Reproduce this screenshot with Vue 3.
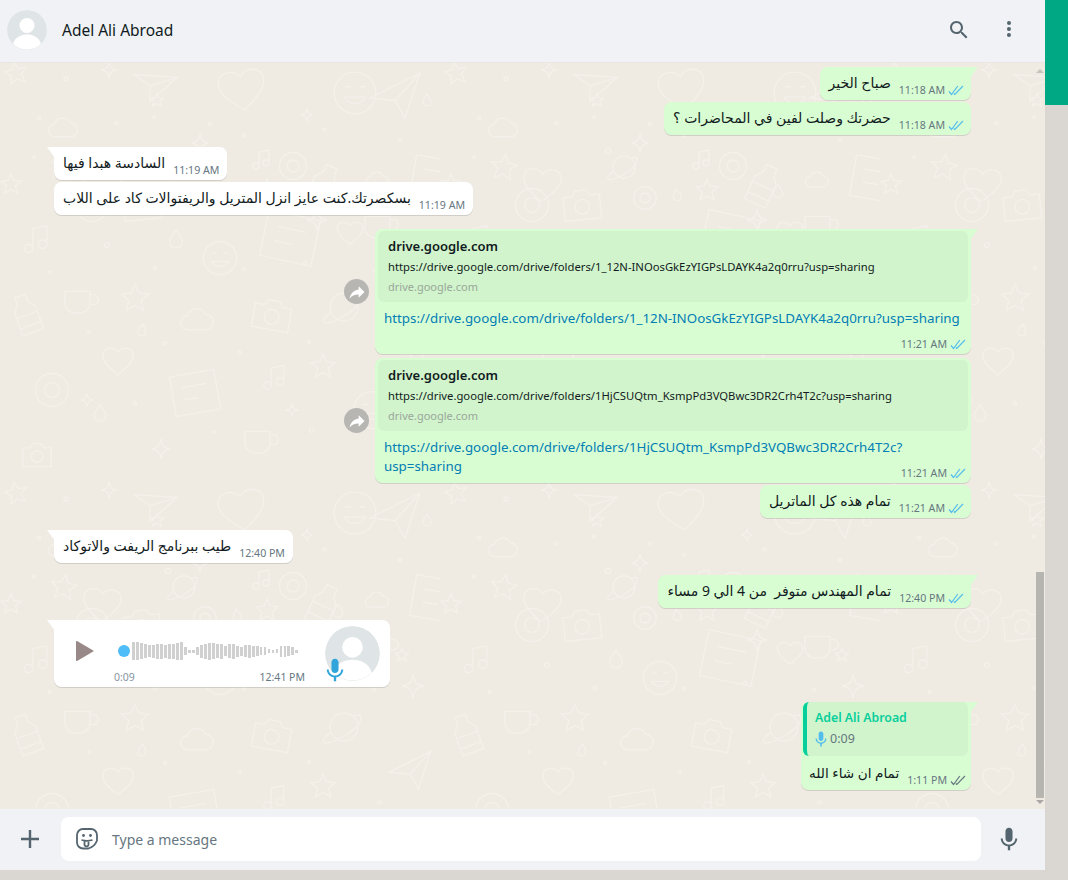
<script setup>
const doodleShapes = {
  star: 'M12 1l3 7 8 1-6 5 2 8-7-4-7 4 2-8-6-5 8-1z',
  spark: 'M12 1c1 7 3 10 10 11-7 1-9 4-10 11-1-7-3-10-10-11 7-1 9-4 10-11z',
  heart: 'M12 21C4 15 1 11 2 7c1-4 7-5 10-1 3-4 9-3 10 1 1 4-2 8-10 14z',
  ring: 'M12 3a9 9 0 1 0 0 18 9 9 0 0 0 0-18zm0 5a4 4 0 1 1 0 8 4 4 0 0 1 0-8z',
  cloud: 'M6 19a5 5 0 0 1-1-10 7 7 0 0 1 13-1 5.500 5.500 0 0 1 0 11z',
  bottle: 'M9 1h6v4l3 4v13H6V9l3-4zM6 12h12M6 18h12',
  camera: 'M2 7h5l2-3h6l2 3h5v13H2zM12 9a4 4 0 1 0 0 8 4 4 0 0 0 0-8z',
  face: 'M12 2a10 10 0 1 0 0 20 10 10 0 0 0 0-20zM7 9h3M14 9h3M7 14c2 4 8 4 10 0z',
  plane: 'M2 14l20-10-6 18-4-7zM12 15l10-11',
  planet: 'M12 5a7 7 0 1 0 0 14 7 7 0 0 0 0-14zM5 15C1 18 1 20 3 20c3 0 12-4 16-9 2-3 2-5 0-5-1 0-2 0-3 1',
  note: 'M9 18V4l10-2v13M9 18a3 3 0 1 1-6 0 3 3 0 0 1 6 0zM19 15a3 3 0 1 1-6 0 3 3 0 0 1 6 0z',
  cup: 'M3 8h15v7a6 6 0 0 1-6 6H9a6 6 0 0 1-6-6zM18 10h2a2 2 0 0 1 0 6h-2',
  card: 'M3 4h18v16H3zM7 9h10M7 14h6',
  dot: 'M12 8a4 4 0 1 0 0 8 4 4 0 0 0 0-8z',
  drop: 'M12 2c5 7 7 10 7 13a7 7 0 0 1-14 0c0-3 2-6 7-13z'
}

const doodles = [
  ['star', 4, 8, 24, -12], ['cloud', 48, 60, 30, 0], ['star', 50, 100, 28, 8], ['ring', 70, 130, 44, 0],
  ['heart', 80, 110, 44, 4], ['spark', 100, 8, 18, 0], ['dot', 60, 20, 12, 0], ['plane', 130, 5, 46, 30],
  ['heart', 215, 10, 54, -8], ['dot', 160, 90, 16, 0], ['spark', 190, 80, 20, 0], ['planet', 165, 95, 38, 0],
  ['note', 250, 95, 24, 0], ['ring', 275, 95, 36, 0], ['star', 255, 125, 24, 0], ['bottle', 300, 110, 46, 25],
  ['face', 330, 15, 50, 0], ['plane', 365, 10, 60, 0], ['card', 405, 95, 62, 10], ['cloud', 365, 115, 24, 0],
  ['camera', 120, 130, 44, -6], ['cup', 360, 150, 40, 0], ['drop', 330, 130, 16, 0], ['star', 0, 120, 22, 0],
  ['card', 255, 150, 70, 12], ['heart', 335, 165, 30, 0], ['spark', 305, 155, 24, 0], ['ring', 190, 130, 30, 0],
  ['note', 20, 170, 34, 0], ['dot', 100, 185, 14, 0], ['drop', 165, 175, 22, 0], ['face', 200, 185, 40, 0],
  ['cup', 60, 225, 40, 0], ['star', 120, 230, 30, 0], ['camera', 250, 240, 44, 10], ['planet', 320, 230, 48, 0],
  ['spark', 400, 200, 26, 0], ['bottle', 5, 240, 44, -20], ['cloud', 180, 250, 34, 0], ['plane', 385, 270, 50, 0],
  ['heart', 100, 290, 36, 0], ['ring', 30, 315, 44, 0], ['card', 165, 310, 60, -10], ['note', 260, 310, 30, 0],
  ['star', 310, 300, 26, 0], ['face', 350, 335, 44, 0], ['drop', 90, 350, 20, 0], ['cup', 240, 365, 40, 0],
  ['spark', 150, 385, 22, 0], ['dot', 305, 370, 14, 0], ['cloud', 410, 365, 30, 0], ['camera', 20, 385, 34, 0],
  ['dot', 34, 60, 10, 0], ['dot', 112, 66, 9, 0], ['dot', 205, 66, 10, 0], ['dot', 320, 72, 9, 0],
  ['dot', 30, 100, 8, 0], ['dot', 150, 60, 8, 0], ['dot', 240, 78, 8, 0], ['dot', 395, 82, 10, 0],
  ['dot', 45, 215, 9, 0], ['dot', 150, 210, 10, 0], ['dot', 240, 212, 8, 0], ['dot', 300, 205, 10, 0],
  ['dot', 370, 212, 9, 0], ['dot', 85, 275, 8, 0], ['dot', 160, 285, 10, 0], ['dot', 235, 295, 9, 0],
  ['dot', 305, 285, 8, 0], ['dot', 375, 325, 9, 0], ['dot', 130, 345, 10, 0], ['dot', 210, 375, 8, 0],
  ['drop', 135, 270, 14, 10], ['drop', 230, 135, 14, -10], ['spark', 80, 340, 14, 0], ['spark', 285, 350, 14, 0],
  ['star', 395, 175, 14, 0], ['star', 150, 40, 14, 0], ['spark', 300, 55, 14, 0], ['drop', 420, 40, 14, 0]
].map(([kind, x, y, size, rot]) => ({
  kind,
  size,
  transform: `translate(${x} ${y}) rotate(${rot} ${size / 2} ${size / 2}) scale(${size / 24})`
}))

const searchPath = 'M15.500 14h-.79l-.28-.27C15.410 12.590 16 11.110 16 9.500 16 5.910 13.090 3 9.500 3S3 5.910 3 9.500 5.910 16 9.500 16c1.610 0 3.090-.59 4.230-1.570l.27.28v.79l5 4.990L20.490 19l-4.990-5zm-6 0C7.010 14 5 11.990 5 9.500S7.010 5 9.500 5 14 7.010 14 9.500 11.990 14 9.500 14z'
const micPath = 'M11.999 14.942c2.001 0 3.531-1.530 3.531-3.531V4.350c0-2.001-1.530-3.531-3.531-3.531S8.469 2.350 8.469 4.350v7.061c0 2.001 1.530 3.531 3.530 3.531zm6.238-3.530c0 3.531-2.942 6.002-6.237 6.002s-6.237-2.471-6.237-6.002H3.761c0 4.001 3.178 7.297 7.061 7.885v3.884h2.354v-3.884c3.884-.588 7.061-3.884 7.061-7.885h-2.001z'

const urlOne = 'https://drive.google.com/drive/folders/1_12N-INOosGkEzYIGPsLDAYK4a2q0rru?usp=sharing'
const urlTwo = 'https://drive.google.com/drive/folders/1HjCSUQtm_KsmpPd3VQBwc3DR2Crh4T2c?usp=sharing'

const waveform = [
  18, 18, 16, 14, 12, 13, 15, 15, 13, 15, 15, 17, 18, 8, 3, 3, 8, 13, 15, 17, 16, 14, 15, 10, 14, 15,
  11, 9, 12, 13, 11, 10, 8, 8, 4, 3, 4, 11, 11, 10, 8, 3
]

const rows = [
  { id: 1, kind: 'text', side: 'out', tail: true, gap: 'first', text: 'صباح الخير', time: '11:18 AM', read: true },
  { id: 2, kind: 'text', side: 'out', gap: 's', text: 'حضرتك وصلت لفين في المحاضرات ؟', time: '11:18 AM', read: true },
  { id: 3, kind: 'text', side: 'in', tail: true, gap: 'l', text: 'السادسة هبدا فيها', time: '11:19 AM' },
  { id: 4, kind: 'text', side: 'in', gap: 's', text: 'بسكصرتك.كنت عايز انزل المتريل والريفتوالات كاد على اللاب', time: '11:19 AM' },
  { id: 5, kind: 'link', side: 'out', tail: true, gap: 'xl', url: urlOne, time: '11:21 AM', read: true },
  { id: 6, kind: 'link', side: 'out', gap: 'm', url: urlTwo, time: '11:21 AM', read: true },
  { id: 7, kind: 'text', side: 'out', gap: 's', text: 'تمام هذه كل الماتريل', time: '11:21 AM', read: true },
  { id: 8, kind: 'text', side: 'in', tail: true, gap: 'l', text: 'طيب ببرنامج الريفت والاتوكاد', time: '12:40 PM' },
  { id: 9, kind: 'text', side: 'out', tail: true, gap: 'l', text: 'تمام المهندس متوفر  من 4 الي 9 مساء', time: '12:40 PM', read: true },
  { id: 10, kind: 'voice', side: 'in', tail: true, gap: 'l' },
  { id: 11, kind: 'quote', side: 'out', tail: true, gap: 'xxl', text: 'تمام ان شاء الله', time: '1:11 PM', read: false }
]
</script>

<template>
  <div class="page">
    <div class="window">
      <header class="topbar">
        <svg class="avatar avatar--small" viewBox="0 0 40 40">
          <circle cx="20" cy="20" r="20" fill="#dfe5e7" />
          <circle cx="20" cy="15.500" r="7.500" fill="#fff" />
          <path d="M6 34c2-7 8-9.500 14-9.500S32 27 34 34a20 20 0 0 1-28 0z" fill="#fff" />
        </svg>
        <span class="topbar__name">Adel Ali Abroad</span>
        <svg class="icon topbar__search" viewBox="0 0 24 24"><path :d="searchPath" /></svg>
        <svg class="icon topbar__menu" viewBox="0 0 24 24">
          <path d="M12 7a2 2 0 1 0-.001-4.001A2 2 0 0 0 12 7zm0 2a2 2 0 1 0-.001 3.999A2 2 0 0 0 12 9zm0 6a2 2 0 1 0-.001 3.999A2 2 0 0 0 12 15z" />
        </svg>
      </header>

      <main class="chat">
        <svg class="chat__doodles" width="100%" height="100%">
          <defs>
            <pattern id="doodles" width="440" height="420" patternUnits="userSpaceOnUse" y="-10">
              <path
                v-for="(d, i) in doodles"
                :key="i"
                :d="doodleShapes[d.kind]"
                :transform="d.transform"
                fill="none"
                stroke="#f4f1eb"
                stroke-width="1.300"
                vector-effect="non-scaling-stroke"
              />
            </pattern>
          </defs>
          <rect width="100%" height="100%" fill="url(#doodles)" />
        </svg>

        <div class="chat__list">
          <div v-for="row in rows" :key="row.id" class="row" :class="[`row--${row.side}`, `row--gap-${row.gap}`]">
            <div v-if="row.kind === 'link'" class="forward">
              <svg viewBox="0 0 24 24" width="20" height="20">
                <path d="M14 9V5l7 7-7 7v-4.100c-5 0-8.500 1.600-11 5.100 1-5 4-10 11-11z" fill="#fff" />
              </svg>
            </div>

            <div class="bubble" :class="[`bubble--${row.side}`, `bubble--${row.kind}`, { 'bubble--tail': row.tail }]">
              <template v-if="row.kind === 'text'">
                <span class="bubble__text" dir="rtl">{{ row.text }}</span>
                <span class="meta">
                  <span class="meta__time">{{ row.time }}</span>
                  <svg v-if="row.side === 'out'" class="check" viewBox="0 0 16 11">
                    <path d="M1 6.500l2.500 3L9.800 1M5.800 8.500l1 1L15 1" />
                  </svg>
                </span>
              </template>

              <template v-else-if="row.kind === 'link'">
                <div class="preview">
                  <div class="preview__title">drive.google.com</div>
                  <div class="preview__url">{{ row.url }}</div>
                  <div class="preview__site">drive.google.com</div>
                </div>
                <a class="link">{{ row.url }}</a>
                <div class="meta meta--over">
                  <span class="meta__time">{{ row.time }}</span>
                  <svg class="check" viewBox="0 0 16 11">
                    <path d="M1 6.500l2.500 3L9.800 1M5.800 8.500l1 1L15 1" />
                  </svg>
                </div>
              </template>

              <template v-else-if="row.kind === 'voice'">
                <svg class="voice__play" viewBox="0 0 18 20"><path d="M0 1v18a1 1 0 0 0 1.500.8L18 10 1.500.2A1 1 0 0 0 0 1z" /></svg>
                <div class="voice__body">
                  <div class="voice__track">
                    <span class="voice__knob"></span>
                    <span v-for="(h, i) in waveform" :key="i" class="voice__bar" :style="{ height: h + 'px' }"></span>
                  </div>
                  <div class="voice__info"><span class="voice__len">0:09</span><span>12:41 PM</span></div>
                </div>
                <div class="voice__avatar">
                  <svg class="avatar avatar--large" viewBox="0 0 40 40">
                    <circle cx="20" cy="20" r="20" fill="#dfe5e7" />
                    <circle cx="20" cy="15.500" r="7.500" fill="#fff" />
                    <path d="M6 34c2-7 8-9.500 14-9.500S32 27 34 34a20 20 0 0 1-28 0z" fill="#fff" />
                  </svg>
                  <svg class="voice__mic" viewBox="0 0 24 24"><path :d="micPath" /></svg>
                </div>
              </template>

              <template v-else>
                <div class="quote">
                  <div class="quote__name">Adel Ali Abroad</div>
                  <div class="quote__audio">
                    <svg viewBox="0 0 24 24" width="16" height="16"><path :d="micPath" /></svg>
                    <span>0:09</span>
                  </div>
                </div>
                <div class="quote__reply">
                  <span class="bubble__text" dir="rtl">{{ row.text }}</span>
                  <span class="meta">
                    <span class="meta__time">{{ row.time }}</span>
                    <svg class="check check--grey" viewBox="0 0 16 11">
                      <path d="M1 6.500l2.500 3L9.800 1M5.800 8.500l1 1L15 1" />
                    </svg>
                  </span>
                </div>
              </template>
            </div>
          </div>
        </div>

        <div class="scroll">
          <span class="scroll__arrow scroll__arrow--up"></span>
          <span class="scroll__thumb"></span>
          <span class="scroll__arrow scroll__arrow--down"></span>
        </div>
      </main>

      <footer class="composer">
        <svg class="icon composer__plus" viewBox="0 0 24 24"><path d="M10.800 3h2.400v7.800H21v2.400h-7.800V21h-2.400v-7.800H3v-2.400h7.800z" /></svg>
        <div class="composer__field">
          <svg class="composer__sticker" viewBox="0 0 24 24">
            <path d="M13.500 21.500H8a6 6 0 0 1-6-6V8a6 6 0 0 1 6-6h8a6 6 0 0 1 6 6v5.500c-1.500 4-5 7-8.500 8z" />
            <path d="M6.500 13c3.500 1 7.500 1 11 0M9.500 14v3.500c0 2.400 4 2.400 4 0V14" />
            <circle cx="8.500" cy="8.500" r="1.400" class="composer__eye" />
            <circle cx="15.500" cy="8.500" r="1.400" class="composer__eye" />
          </svg>
          <span class="composer__placeholder">Type a message</span>
        </div>
        <svg class="icon composer__mic" viewBox="0 0 24 24"><path :d="micPath" /></svg>
      </footer>
    </div>

    <aside class="side"><div class="side__accent"></div></aside>
  </div>
</template>

<style>
html,
body {
  margin: 0;
  background: #dad7d2;
}
</style>

<style scoped>
.page {
  display: flex;
  height: 880px;
  overflow: hidden;
  background: #dad7d2;
  font-family: "Noto Sans", "DejaVu Sans", sans-serif;
  color: #111b21;
}
.window {
  width: 1045px;
  height: 870px;
  display: flex;
  flex-direction: column;
  flex: none;
}
.side {
  flex: 1;
}
.side__accent {
  height: 105px;
  background: #00a884;
}

.icon {
  width: 24px;
  height: 24px;
  fill: #54656f;
  flex: none;
}
.avatar {
  display: block;
  border-radius: 50%;
  flex: none;
}
.avatar--small {
  width: 40px;
  height: 40px;
}
.avatar--large {
  width: 55px;
  height: 55px;
}

.topbar {
  height: 63px;
  box-sizing: border-box;
  flex: none;
  display: flex;
  align-items: center;
  padding: 0 24px 3px 7px;
  background: #f0f2f5;
  border-bottom: 1px solid #e9e7e3;
}
.topbar__name {
  margin-left: 15px;
  font-size: 15.500px;
  flex: 1;
}
.topbar__menu {
  margin-left: 26px;
}

.chat {
  position: relative;
  flex: 1;
  min-height: 0;
  overflow: hidden;
  background: #efeae2;
}
.chat__doodles {
  position: absolute;
  inset: 0;
}
.chat__list {
  position: relative;
  padding: 0 74px 0 54px;
}

.row {
  display: flex;
  align-items: center;
}
.row--out {
  justify-content: flex-end;
}
.row--gap-first { padding-top: 4px; }
.row--gap-s { margin-top: 2px; }
.row--gap-m { margin-top: 4px; }
.row--gap-l { margin-top: 12px; }
.row--gap-xl { margin-top: 14px; }
.row--gap-xxl { margin-top: 15px; }

.bubble {
  position: relative;
  border-radius: 7.500px;
  box-shadow: 0 1px 0.500px rgba(11, 20, 26, 0.13);
  font-size: 14px;
  line-height: 19px;
}
.bubble--in {
  background: #fff;
}
.bubble--out {
  background: #d9fdd3;
}
.bubble--tail.bubble--in {
  border-top-left-radius: 0;
}
.bubble--tail.bubble--out {
  border-top-right-radius: 0;
}
.bubble--tail::before {
  content: "";
  position: absolute;
  top: 0;
  width: 8px;
  height: 11px;
  background: inherit;
}
.bubble--tail.bubble--in::before {
  left: -7px;
  clip-path: polygon(0 0, 100% 0, 100% 100%);
}
.bubble--tail.bubble--out::before {
  right: -7px;
  clip-path: polygon(0 0, 100% 0, 0 100%);
}

.bubble--text {
  display: flex;
  align-items: flex-end;
  height: 33px;
  box-sizing: border-box;
  padding: 5px 7px 2px 9px;
}
.bubble--in.bubble--text {
  padding-right: 8px;
}
.bubble__text {
  padding-bottom: 6px;
  white-space: pre;
}
.meta {
  display: inline-flex;
  align-items: center;
  gap: 3px;
  margin-left: 8px;
  font-size: 10.600px;
  line-height: 15px;
  color: #667781;
}
.meta--over {
  position: absolute;
  right: 5px;
  bottom: 2px;
}
.check {
  width: 16px;
  height: 11px;
  fill: none;
  stroke: #53bdeb;
  stroke-width: 1.200;
}
.check--grey {
  stroke: #667781;
}

.forward {
  width: 25px;
  height: 25px;
  margin-right: 6px;
  border-radius: 50%;
  background: #b8b6b3;
  display: flex;
  align-items: center;
  justify-content: center;
}

.bubble--link {
  width: 596px;
  height: 125px;
  box-sizing: border-box;
  padding: 2px 3px 3px;
}
.preview {
  height: 71px;
  box-sizing: border-box;
  padding: 6px 10px;
  border-radius: 6px;
  background: #d1f4cc;
}
.preview__title {
  font-size: 13px;
  line-height: 18px;
  font-weight: 600;
}
.preview__url {
  margin-top: 3px;
  font-size: 11.270px;
  line-height: 18px;
}
.preview__site {
  margin-top: 2px;
  font-size: 11px;
  line-height: 18px;
  color: #9aa79b;
}
.link {
  display: block;
  margin: 7px 6px 0;
  font-size: 13.340px;
  line-height: 19px;
  color: #027eb5;
}

.bubble--voice {
  width: 336px;
  height: 67px;
  box-sizing: border-box;
  display: flex;
  align-items: flex-start;
  padding: 0 10px 0 22px;
}
.voice__play {
  width: 18px;
  height: 20px;
  fill: #998888;
  flex: none;
  margin-top: 21px;
}
.voice__body {
  margin-left: 20px;
  margin-top: 21px;
  width: 191px;
  flex: none;
}
.voice__track {
  display: flex;
  align-items: center;
  height: 20px;
  gap: 1.100px;
  padding-left: 4px;
}
.voice__knob {
  width: 12px;
  height: 12px;
  border-radius: 50%;
  background: #4fbdf7;
  margin-right: 1px;
}
.voice__bar {
  width: 2.900px;
  background: #d0d0d0;
}
.voice__info {
  display: flex;
  justify-content: space-between;
  margin-top: 9px;
  font-size: 10.500px;
  line-height: 14px;
  color: #667781;
}
.voice__len {
  color: #8696a0;
}
.voice__avatar {
  position: relative;
  margin-left: 20px;
  margin-top: 6px;
}
.voice__mic {
  position: absolute;
  left: -2px;
  bottom: -1px;
  width: 24px;
  height: 24px;
  fill: #30a5dc;
}

.bubble--quote {
  width: 170px;
  height: 88px;
  box-sizing: border-box;
  padding: 0 3px 0 2px;
}
.quote {
  height: 54px;
  box-sizing: border-box;
  border-left: 4px solid #06cf9c;
  border-radius: 6px;
  background: #d1f4cc;
  padding: 7px 8px;
}
.quote__name {
  font-size: 12.300px;
  line-height: 18px;
  font-weight: 600;
  color: #06cf9c;
}
.quote__audio {
  display: flex;
  align-items: center;
  gap: 1px;
  margin-top: 3px;
  margin-left: -2px;
  font-size: 12.500px;
  line-height: 18px;
  color: #667781;
}
.quote__audio svg {
  fill: #53bdeb;
}
.quote__reply {
  display: flex;
  align-items: flex-end;
  margin-top: 7px;
  padding-left: 6px;
  white-space: nowrap;
}
.quote__reply .bubble__text {
  font-size: 13.600px;
}

.scroll {
  position: absolute;
  top: 0;
  right: 1px;
  bottom: 0;
  width: 8px;
}
.scroll__thumb {
  position: absolute;
  left: 0;
  right: 0;
  top: 509px;
  height: 226px;
  background: #b7b5b0;
}
.scroll__arrow {
  position: absolute;
  left: 0;
  border-left: 4px solid transparent;
  border-right: 4px solid transparent;
}
.scroll__arrow--up {
  top: 6px;
  border-bottom: 4px solid #c6c4c0;
}
.scroll__arrow--down {
  bottom: 5px;
  border-top: 4px solid #a9a7a3;
}

.composer {
  height: 61px;
  box-sizing: border-box;
  flex: none;
  display: flex;
  align-items: center;
  padding: 0 24px 1px 18px;
  background: #f0f2f5;
}
.composer__field {
  flex: 1;
  height: 44px;
  margin: 0 16px 0 19px;
  border-radius: 8px;
  background: #fff;
  display: flex;
  align-items: center;
  padding-left: 14px;
}
.composer__sticker {
  width: 24px;
  height: 24px;
  fill: none;
  stroke: #54656f;
  stroke-width: 1.800;
}
.composer__eye {
  fill: #54656f;
  stroke: none;
}
.composer__placeholder {
  margin-left: 13px;
  font-size: 14px;
  color: #667781;
}
</style>
